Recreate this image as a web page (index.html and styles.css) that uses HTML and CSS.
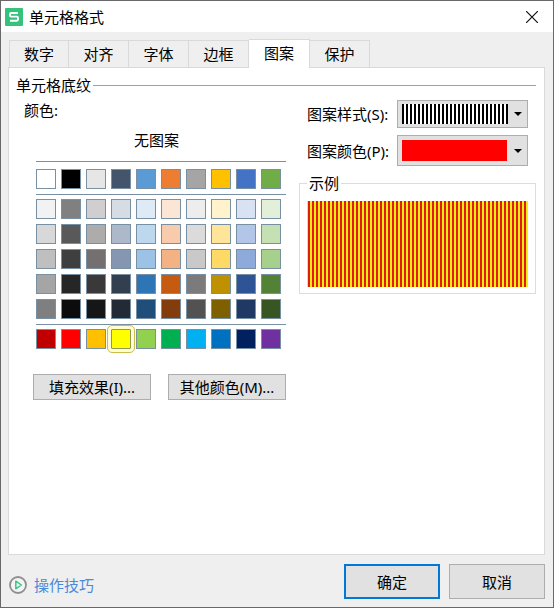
FILE: index.html
```html
<!DOCTYPE html>
<html lang="zh-CN">
<head>
<meta charset="utf-8">
<meta name="viewport" content="width=device-width, initial-scale=1">
<title>单元格格式</title>
<link rel="stylesheet" href="styles.css">
</head>
<body>
<form class="dialog">
  <header class="titlebar">
    <svg class="logo" viewBox="0 0 18 18" aria-hidden="true">
      <rect width="18" height="18" rx="1" fill="#35c27d"/>
      <path d="M13 5H6.2Q5 5 5 6.200V7.400Q5 8.600 6.200 8.600H11.800Q13 8.600 13 9.800V11.500Q13 12.700 11.800 12.700H5" fill="none" stroke="#fff" stroke-width="1.900"/>
    </svg>
    <h1 class="title">单元格格式</h1>
    <button class="close" type="button" aria-label="关闭">
      <svg viewBox="0 0 12 12" aria-hidden="true"><path d="M0 0L12 12M12 0L0 12" stroke="#111" stroke-width="1.200"/></svg>
    </button>
  </header>

  <main class="content">
    <nav class="tabs" role="tablist">
      <button class="tab" type="button" role="tab">数字</button>
      <button class="tab" type="button" role="tab">对齐</button>
      <button class="tab" type="button" role="tab">字体</button>
      <button class="tab" type="button" role="tab">边框</button>
      <button class="tab tab-active" type="button" role="tab" aria-selected="true">图案</button>
      <button class="tab" type="button" role="tab">保护</button>
    </nav>

    <section class="panel" role="tabpanel">
      <h2 class="heading">单元格底纹</h2>
      <div class="columns">
        <div class="colors">
          <h3 class="caption">颜色:</h3>
          <div class="palette" id="palette">
            <button class="none" type="button">无图案</button>
          </div>
          <div class="more">
            <button class="button" type="button">填充效果(I)...</button>
            <button class="button" type="button">其他颜色(M)...</button>
          </div>
        </div>

        <div class="pattern">
          <div class="field">
            <label for="style">图案样式(S):</label>
            <select class="picker picker-style" id="style"><option value="vertical" aria-label="竖条纹"></option></select>
          </div>
          <div class="field">
            <label for="color">图案颜色(P):</label>
            <select class="picker picker-color" id="color"><option value="#ff0000" aria-label="红色"></option></select>
          </div>
          <fieldset class="sample">
            <legend>示例</legend>
            <div class="preview"></div>
          </fieldset>
        </div>
      </div>
    </section>
  </main>

  <footer class="footer">
    <a class="tips" href="#">
      <svg viewBox="0 0 18 18" aria-hidden="true">
        <circle cx="9" cy="9" r="8" fill="#f4f4f4" stroke="#8f8f8f" stroke-width="1.800"/>
        <path d="M6.800 5.200V12.800L12.400 9Z" fill="none" stroke="#3fc58a" stroke-width="1.500" stroke-linejoin="round"/>
      </svg>
      操作技巧
    </a>
    <button class="button action action-default" type="submit">确定</button>
    <button class="button action" type="button">取消</button>
  </footer>
</form>
<script src="palette.js"></script>
</body>
</html>
```
FILE: styles.css
```css
* {
  box-sizing: border-box;
}

body {
  margin: 0;
  background: #efefef;
  color: #000;
  font: 15px/20px "Noto Sans", "Noto Sans CJK SC", sans-serif;
}

button,
select {
  margin: 0;
  padding: 0;
  border: 0;
  border-radius: 0;
  background: none;
  color: inherit;
  font: inherit;
}

h1,
h2,
h3 {
  margin: 0;
  font: inherit;
}

.dialog {
  display: flex;
  flex-direction: column;
  min-height: 100vh;
  border: 1px solid #69676a;
}

.titlebar {
  display: flex;
  align-items: center;
  gap: 6px;
  height: 31px;
  padding: 0 15px 0 4px;
  background: #fff;
}

.logo {
  width: 18px;
  height: 18px;
}

.title {
  flex: 1;
}

.close {
  display: flex;
}

.close svg {
  width: 12px;
  height: 12px;
}

.content {
  display: flex;
  flex: 1;
  flex-direction: column;
  padding: 7px 8px 0 7px;
}

.tabs {
  display: flex;
  align-items: flex-end;
  padding-left: 1px;
}

.tab {
  width: 60px;
  height: 27px;
  border: 1px solid #d9d9d9;
  border-width: 1px 1px 0 0;
}

.tab:first-child {
  border-left-width: 1px;
}

.tab-active {
  z-index: 1;
  width: 61px;
  height: 29px;
  margin-bottom: -1px;
  padding-bottom: 2px;
  background: #fff;
}

.panel {
  flex: 1;
  padding: 7px 8px 7px 7px;
  border: 1px solid #d9d9d9;
  background: #fff;
}

.heading {
  display: flex;
  align-items: center;
  gap: 2px;
}

.heading::after {
  flex: 1;
  height: 1px;
  background: #a0a0a0;
  content: "";
}

.columns {
  display: grid;
  grid-template-columns: auto 1fr;
  gap: 13px;
  padding-top: 5px;
}

.colors {
  padding-left: 8px;
}

.palette {
  display: flex;
  flex-direction: column;
  gap: 5px;
  width: 250px;
  margin-left: 12px;
  padding-top: 10px;
}

.none {
  align-self: center;
  margin: 0 9px 6px 0;
}

.swatches {
  display: grid;
  grid-template-columns: repeat(10, 20px);
  gap: 5px;
  padding-top: 7px;
  border-top: 1px solid #7890a4;
}

.swatches + .swatches {
  padding-top: 4px;
}

.swatch {
  width: 20px;
  height: 20px;
  margin: 0;
  border: 1px solid #7890a4;
  appearance: none;
}

.swatch:checked {
  outline: 1px solid #c9bd4e;
  outline-offset: 3px;
  border-color: #8f9a50;
  border-radius: 1px;
  box-shadow: 0 0 0 3px #fffbd2;
}

.more {
  display: flex;
  gap: 17px;
  padding: 25px 0 0 9px;
}

.button {
  width: 118px;
  height: 26px;
  border: 1px solid #adadad;
  background: #e1e1e1;
}

.pattern {
  display: flex;
  flex-direction: column;
  min-width: 0;
  gap: 7px;
}

.field {
  display: grid;
  grid-template-columns: 83px 1fr;
  align-items: center;
  gap: 7px;
  padding: 0 8px;
}

.field label {
  white-space: nowrap;
}

.picker {
  min-width: 0;
  height: 28px;
  border: 1px solid #adadad;
  appearance: none;
  background-color: #e1e1e1;
  background-repeat: no-repeat;
}

.picker-style {
  background-image:
    url("data:image/svg+xml,%3Csvg xmlns='http://www.w3.org/2000/svg' viewBox='0 0 8 4'%3E%3Cpath d='M0 0H8L4 4Z'/%3E%3C/svg%3E"),
    repeating-linear-gradient(90deg, #000 0 2px, #fff 2px 4px);
  background-position: right 5px center, 4px center;
  background-size: 8px 4px, calc(100% - 23px) 20px;
}

.picker-color {
  height: 31px;
  background-image:
    url("data:image/svg+xml,%3Csvg xmlns='http://www.w3.org/2000/svg' viewBox='0 0 8 4'%3E%3Cpath d='M0 0H8L4 4Z'/%3E%3C/svg%3E"),
    linear-gradient(#f00, #f00);
  background-position: right 5px center, 4px center;
  background-size: 8px 4px, calc(100% - 24px) 21px;
}

.sample {
  min-width: 0;
  margin: 0;
  padding: 8px 7px 6px;
  border: 1px solid #dcdcdc;
}

.sample legend {
  padding: 0 2px;
}

.preview {
  height: 86px;
  background: repeating-linear-gradient(90deg, #ffeb14 0 1px, #e31b0c 1px 3px, #ffeb14 3px 4px);
}

.footer {
  display: flex;
  align-items: center;
  gap: 9px;
  padding: 9px 8px 8px;
}

.tips {
  display: flex;
  align-items: center;
  gap: 7px;
  margin-right: auto;
  padding-top: 7px;
  color: #4a8ad8;
  text-decoration: none;
}

.tips svg {
  width: 18px;
  height: 18px;
}

.action {
  width: 96px;
  height: 35px;
}

.action-default {
  border: 2px solid #0078d7;
}
```
FILE: palette.js
```js
const groups = [
  ["#ffffff #000000 #e7e6e6 #44546a #5b9bd5 #ed7d31 #a5a5a5 #ffc000 #4472c4 #70ad47"],
  [
    "#f2f2f2 #808080 #d0cece #d6dce4 #deebf6 #fbe5d5 #ededed #fff2cc #d9e2f3 #e2efd9",
    "#d8d8d8 #595959 #aeabab #adb9ca #bdd7ee #f7cbac #dbdbdb #fee599 #b4c6e7 #c5e0b3",
    "#bfbfbf #3f3f3f #757070 #8496b0 #9cc3e5 #f4b183 #c9c9c9 #ffd965 #8eaadb #a8d08d",
    "#a5a5a5 #262626 #3a3838 #323f4f #2e75b5 #c55a11 #7b7b7b #bf9000 #2f5496 #538135",
    "#7f7f7f #0c0c0c #171616 #222a35 #1e4e79 #833c0b #525252 #7f6000 #1f3864 #375623"
  ],
  ["#c00000 #ff0000 #ffc000 #ffff00 #92d050 #00b050 #00b0f0 #0070c0 #002060 #7030a0"]
];

const palette = document.getElementById("palette");

for (const rows of groups) {
  const group = document.createElement("div");
  group.className = "swatches";
  for (const color of rows.join(" ").split(" ")) {
    const swatch = document.createElement("input");
    swatch.type = "radio";
    swatch.name = "fill";
    swatch.className = "swatch";
    swatch.value = color;
    swatch.checked = color === "#ffff00";
    swatch.setAttribute("aria-label", color);
    swatch.style.backgroundColor = color;
    group.append(swatch);
  }
  palette.append(group);
}
```
